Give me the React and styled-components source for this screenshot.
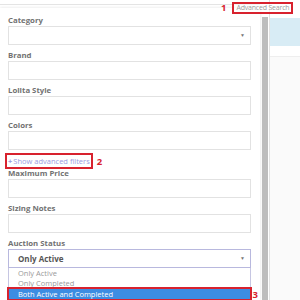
import styled, { createGlobalStyle } from "styled-components";

const Global = createGlobalStyle`
  body {
    margin: 0;
    background: #fff;
    font-family: "Open Sans", "Liberation Sans", sans-serif;
    overflow: hidden;
  }
`;

const Page = styled.div`
  position: relative;
  width: 300px;
  height: 300px;
  display: flex;
  overflow: hidden;
`;

const LeftCol = styled.div`
  width: 260px;
  display: flex;
  flex-direction: column;
`;

const TopLine = styled.div`
  height: 5px;
  border-bottom: 1px solid #e4e4e4;
  margin-bottom: 3px;
`;

const Panel = styled.div`
  flex: 1;
  background: #fff;
  box-shadow: 0 0 3px rgba(0, 0, 0, 0.12);
  padding: 7px 9px 0 8px;
`;

const Track = styled.div`
  width: 9px;
  padding-top: 17px;
  display: flex;
  justify-content: center;
`;

const Thumb = styled.div`
  width: 6px;
  background: #bdbdbd;
`;

const Side = styled.div`
  flex: 1;
  border-left: 1px solid #e2e2e2;
  padding-top: 18px;
  display: flex;
  flex-direction: column;
`;

const Band = styled.div`
  height: 28px;
  background: #d8ecf5;
`;

const Lower = styled.div`
  flex: 1;
  margin-top: 10px;
  border-top: 1px solid #eee;
  background: #fafafa;
`;

const Field = styled.div`
  margin-bottom: 5px;
`;

const Label = styled.div`
  font-size: 7.8px;
  font-weight: 700;
  color: #727272;
  line-height: 11px;
`;

const Box = styled.div`
  height: 19px;
  box-sizing: border-box;
  border: 1px solid ${(p) => (p.$focus ? "#b8b8de" : "#e2e2e2")};
  display: flex;
  align-items: center;
  padding: 0 5px 0 9px;
  font-size: 8px;
  font-weight: 700;
  color: #555;
`;

const Value = styled.span`
  flex: 1;
`;

const Caret = styled.span`
  font-size: 5px;
  color: #777;
`;

const LinkRow = styled.div`
  height: 13px;
  display: flex;
  align-items: center;
  gap: 7px;
`;

const Link = styled.span`
  font-size: 7.5px;
  line-height: 10px;
  color: #9b9be2;
  outline: 2px solid #d8222e;
  outline-offset: 1px;
  b {
    font-weight: 700;
    margin-right: 1px;
  }
`;

const Num = styled.span`
  font-size: 9.5px;
  font-weight: 700;
  color: #d8222e;
`;

const List = styled.div`
  position: relative;
  border: 1px solid #c6c6e2;
  border-top: none;
`;

const Option = styled.div`
  height: 10.5px;
  line-height: 10.5px;
  padding-left: 9px;
  font-size: 7.5px;
  color: ${(p) => (p.$active ? "#fff" : "#9a9a9a")};
  background: ${(p) => (p.$active ? "#3d8de2" : "transparent")};
  outline: ${(p) => (p.$active ? "2px solid #d8222e" : "none")};
`;

const ListNum = styled(Num)`
  position: absolute;
  right: -8px;
  bottom: -1px;
  line-height: 10px;
`;

const SearchCallout = styled.div`
  position: absolute;
  top: 1px;
  left: 221px;
  display: flex;
  align-items: center;
  gap: 6px;
`;

const SearchLink = styled.span`
  border: 2px solid #d8222e;
  padding: 0 2px;
  height: 12px;
  box-sizing: border-box;
  display: flex;
  align-items: center;
  font-size: 7px;
  letter-spacing: -0.2px;
  color: #9c9c9c;
  background: rgba(255, 255, 255, 0.6);
`;

const fields = ["Brand", "Lolita Style", "Colors"];

export default function App() {
  return (
    <>
      <Global />
      <Page>
        <LeftCol>
          <TopLine />
          <Panel>
            <Field>
              <Label>Category</Label>
              <Box>
                <Value />
                <Caret>▼</Caret>
              </Box>
            </Field>
            {fields.map((f) => (
              <Field key={f}>
                <Label>{f}</Label>
                <Box />
              </Field>
            ))}
            <LinkRow>
              <Link>
                <b>+</b>Show advanced filters
              </Link>
              <Num>2</Num>
            </LinkRow>
            <Field>
              <Label>Maximum Price</Label>
              <Box />
            </Field>
            <Field>
              <Label>Sizing Notes</Label>
              <Box />
            </Field>
            <div>
              <Label>Auction Status</Label>
              <Box $focus>
                <Value>Only Active</Value>
                <Caret>▼</Caret>
              </Box>
              <List>
                <Option>Only Active</Option>
                <Option>Only Completed</Option>
                <Option $active>Both Active and Completed</Option>
                <ListNum>3</ListNum>
              </List>
            </div>
          </Panel>
        </LeftCol>
        <Track>
          <Thumb />
        </Track>
        <Side>
          <Band />
          <Lower />
        </Side>
        <SearchCallout>
          <Num>1</Num>
          <SearchLink>Advanced Search</SearchLink>
        </SearchCallout>
      </Page>
    </>
  );
}
